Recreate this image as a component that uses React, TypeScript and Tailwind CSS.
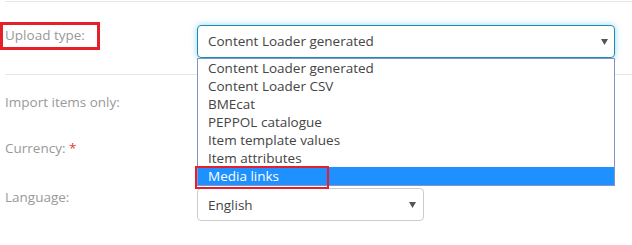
import React from "react";

const OPTIONS = [
  "Content Loader generated",
  "Content Loader CSV",
  "BMEcat",
  "PEPPOL catalogue",
  "Item template values",
  "Item attributes",
  "Media links",
];

function Caret() {
  return (
    <svg width="7" height="6" viewBox="0 0 7 6" className="shrink-0">
      <polygon points="0,0 7,0 3.5,6" fill="#555" />
    </svg>
  );
}

export default function App() {
  return (
    <div className="relative h-[245px] w-[632px] overflow-hidden bg-white font-['Open_Sans',sans-serif] text-[13.5px] text-[#444]">
      {/* upload type row */}
      <div className="ml-[5px] mt-px h-[73px] border-t border-[#e6e6e6]">
        <div className="-ml-[5px] flex items-start">
          <div className="mt-[20px] flex h-[28px] w-[100px] border-[3px] border-[#e5202b] pl-[2px] leading-[20px] text-[#999]">
            Upload type:
          </div>
          <div className="ml-[97px] mt-[23px] flex h-[33px] w-[418px] items-center justify-between rounded-[4px] border border-[#1a8db2] pl-[10px] pr-[6px] shadow-[0_0_6px_rgba(60,180,220,0.55)]">
            <span>Content Loader generated</span>
            <Caret />
          </div>
        </div>
      </div>

      {/* other fields */}
      <div className="ml-[5px] border-t border-[#e6e6e6] pt-[17px] leading-[20px] text-[#999]">
        <div className="h-[20px]">Import items only:</div>
        <div className="mt-[26px] h-[20px]">
          Currency: <span className="text-[#e53935]">*</span>
        </div>
        <div className="mt-[29px] flex items-start">
          <div className="w-[192px]">Language:</div>
          <div className="mt-px flex h-[33px] w-[227px] items-center justify-between rounded-[4px] border border-[#cccccc] pl-[10px] pr-[7px] text-[#444]">
            <span>English</span>
            <Caret />
          </div>
        </div>
      </div>

      {/* open dropdown list */}
      <ul className="absolute left-[197px] top-[58px] w-[418px] border border-[#8593c8] bg-white">
        {OPTIONS.map((o, i) => (
          <li
            key={o}
            className={
              i === OPTIONS.length - 1
                ? "h-[18px] bg-[#1e90ff] pl-[10px] leading-[18px] text-white"
                : "h-[18px] pl-[10px] leading-[18px] text-[#444]"
            }
          >
            {o}
          </li>
        ))}
      </ul>

      {/* highlight frame */}
      <div className="absolute left-[195px] top-[166px] h-[23px] w-[134px] border-[2.5px] border-[#e5202b]" />
    </div>
  );
}
